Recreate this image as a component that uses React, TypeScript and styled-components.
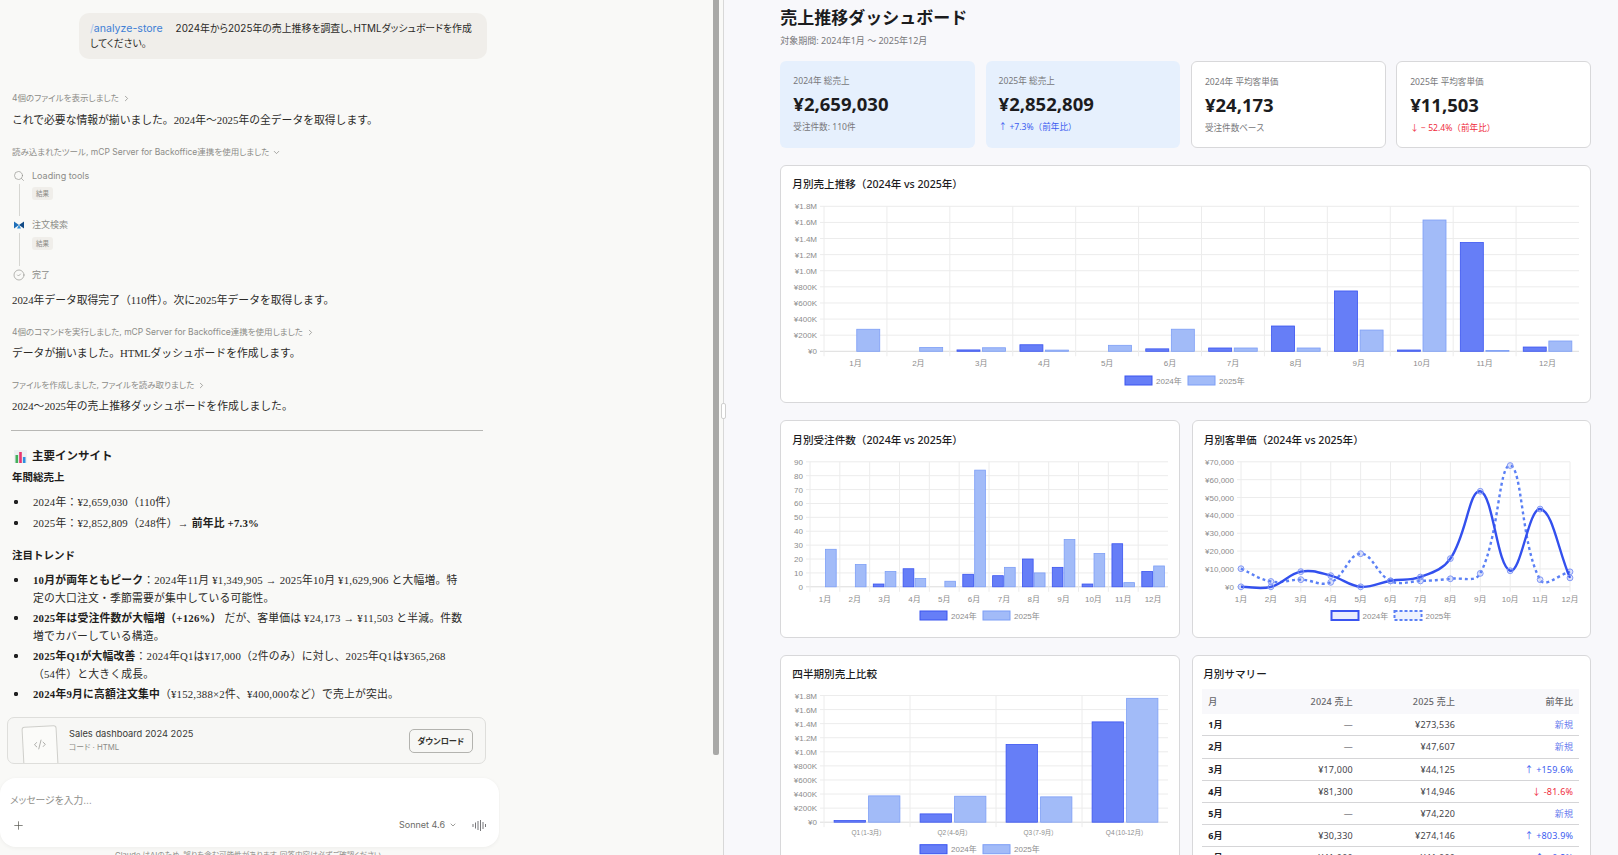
import React from 'react'
import styled, { createGlobalStyle } from 'styled-components'
import { ChevronRight, ChevronDown, Search, CircleCheck, Plus, CodeXml } from 'lucide-react'

/*---> Data <---*/
const MONTHS = ['1月', '2月', '3月', '4月', '5月', '6月', '7月', '8月', '9月', '10月', '11月', '12月']
const SALES_2024 = [0, 0, 17000, 81300, 0, 30330, 41000, 314000, 749000, 16000, 1349905, 53000]
const SALES_2025 = [273536, 47607, 44125, 14946, 74220, 274146, 41000, 41000, 264000, 1629906, 10000, 128000]
const ORDERS_2024 = [0, 0, 2, 13, 0, 9, 8, 20, 14, 2, 31, 11]
const ORDERS_2025 = [27, 16, 11, 6, 4, 84, 14, 10, 34, 24, 3, 15]
const PRICE_2024 = [0, 0, 8500, 6254, 0, 3370, 5500, 15800, 53500, 9000, 43545, 5000]
const PRICE_2025 = [10131, 2975, 4011, 2491, 18555, 3264, 3300, 4500, 7500, 67913, 4000, 8400]
const QUARTERS = ['Q1（1-3月）', 'Q2（4-6月）', 'Q3（7-9月）', 'Q4（10-12月）']
const QUARTER_2024 = [24000, 118000, 1104000, 1425000]
const QUARTER_2025 = [374000, 369000, 360000, 1760000]
const MONEY_TICKS = ['¥0', '¥200K', '¥400K', '¥600K', '¥800K', '¥1.0M', '¥1.2M', '¥1.4M', '¥1.6M', '¥1.8M']
const ORDER_TICKS = ['0', '10', '20', '30', '40', '50', '60', '70', '80', '90']
const PRICE_TICKS = ['¥0', '¥10,000', '¥20,000', '¥30,000', '¥40,000', '¥50,000', '¥60,000', '¥70,000']

const KPIS = [
  { label: '2024年 総売上', value: '¥2,659,030', note: '受注件数: 110件', tone: 'muted', blue: true },
  { label: '2025年 総売上', value: '¥2,852,809', note: '↑ +7.3%（前年比）', tone: 'up', blue: true },
  { label: '2024年 平均客単価', value: '¥24,173', note: '受注件数ベース', tone: 'muted', blue: false },
  { label: '2025年 平均客単価', value: '¥11,503', note: '↓ − 52.4%（前年比）', tone: 'down', blue: false },
]

const SUMMARY = [
  { month: '1月', a: '—', b: '¥273,536', yoy: '新規', tone: 'new' },
  { month: '2月', a: '—', b: '¥47,607', yoy: '新規', tone: 'new' },
  { month: '3月', a: '¥17,000', b: '¥44,125', yoy: '↑ +159.6%', tone: 'up' },
  { month: '4月', a: '¥81,300', b: '¥14,946', yoy: '↓ -81.6%', tone: 'down' },
  { month: '5月', a: '—', b: '¥74,220', yoy: '新規', tone: 'new' },
  { month: '6月', a: '¥30,330', b: '¥274,146', yoy: '↑ +803.9%', tone: 'up' },
  { month: '7月', a: '¥41,000', b: '¥41,000', yoy: '↑ +0.2%', tone: 'up' },
]

const TONES: Record<string, string> = {
  muted: '#77777a',
  up: '#3b5cf0',
  down: '#ef2b3b',
  new: '#6d80ee',
}

const BLUE_FILL = '#667ef7'
const BLUE_LINE = '#3a54f0'
const PALE_FILL = '#a2bbf8'
const PALE_LINE = '#7d9ef6'
const CHART_FONT = '"Liberation Sans", "Noto Sans CJK JP", sans-serif'

/*---> Chart helpers <---*/
type Frame = {
  width: number
  height: number
  left: number
  right: number
  top: number
  bottom: number
  labelY: number
  legendY: number
  legendX: number
}

const splinePath = (points: number[][]) => {
  const tension = 0.4
  const controls = points.map((point, i) => {
    const prev = points[i - 1] || point
    const next = points[i + 1] || point
    const d01 = Math.hypot(point[0] - prev[0], point[1] - prev[1])
    const d12 = Math.hypot(next[0] - point[0], next[1] - point[1])
    const total = d01 + d12 || 1
    const fa = (tension * d01) / total
    const fb = (tension * d12) / total
    return {
      inX: point[0] - fa * (next[0] - prev[0]),
      inY: point[1] - fa * (next[1] - prev[1]),
      outX: point[0] + fb * (next[0] - prev[0]),
      outY: point[1] + fb * (next[1] - prev[1]),
    }
  })
  let d = `M${points[0][0]} ${points[0][1]}`
  for (let i = 1; i < points.length; i++) {
    d += ` C${controls[i - 1].outX} ${controls[i - 1].outY} ${controls[i].inX} ${controls[i].inY} ${points[i][0]} ${points[i][1]}`
  }
  return d
}

const AxisGrid = ({
  frame,
  ticks,
  labels,
  categoryAxis,
  labelSize = 8,
}: {
  frame: Frame
  ticks: string[]
  labels: string[]
  categoryAxis: boolean
  labelSize?: number
}) => {
  const { left, right, top, bottom, labelY } = frame
  const xCount = categoryAxis ? labels.length : labels.length - 1
  const xStep = (right - left) / xCount
  const yStep = (bottom - top) / (ticks.length - 1)
  const xLines = Array.from({ length: xCount + 1 }, (_, i) => left + xStep * i)

  return (
    <g fontFamily={CHART_FONT} fill='#8c8c8c'>
      {ticks.map((tick, i) => (
        <g key={tick}>
          <line x1={left - 4} x2={right} y1={bottom - yStep * i} y2={bottom - yStep * i} stroke={i === 0 ? '#dcdcdc' : '#ececec'} />
          <text x={left - 7} y={bottom - yStep * i + 3} fontSize='8' textAnchor='end'>
            {tick}
          </text>
        </g>
      ))}
      {xLines.map((x, i) =>
        categoryAxis && i === xCount ? null : (
          <line key={x} x1={x} x2={x} y1={top} y2={bottom + 5} stroke='#ececec' />
        )
      )}
      {labels.map((label, i) => (
        <text
          key={label}
          x={categoryAxis ? left + xStep * (i + 0.5) : left + xStep * i}
          y={labelY + 3}
          fontSize={labelSize}
          textAnchor='middle'
        >
          {label}
        </text>
      ))}
    </g>
  )
}

const Legend = ({ frame, dashed }: { frame: Frame; dashed?: boolean }) => {
  const { legendX: x, legendY: y } = frame
  const items = [
    { label: '2024年', offset: 0, fill: dashed ? '#e9edfd' : BLUE_FILL, line: BLUE_LINE, dash: undefined },
    { label: '2025年', offset: 63, fill: dashed ? '#eef2fe' : PALE_FILL, line: dashed ? '#5b80f5' : PALE_LINE, dash: dashed ? '3 2' : undefined },
  ]
  return (
    <g fontFamily={CHART_FONT}>
      {items.map((item) => (
        <g key={item.label}>
          <rect
            x={x + item.offset}
            y={y - 4.5}
            width='27'
            height='9'
            fill={item.fill}
            stroke={item.line}
            strokeWidth={dashed ? 2 : 1}
            strokeDasharray={item.dash}
          />
          <text x={x + item.offset + 31} y={y + 3} fontSize='8' fill='#8c8c8c'>
            {item.label}
          </text>
        </g>
      ))}
    </g>
  )
}

const BarChart = ({
  frame,
  ticks,
  labels,
  max,
  first,
  second,
  barWidth,
  gap,
  labelSize,
}: {
  frame: Frame
  ticks: string[]
  labels: string[]
  max: number
  first: number[]
  second: number[]
  barWidth: number
  gap: number
  labelSize?: number
}) => {
  const { left, right, top, bottom, width, height } = frame
  const step = (right - left) / labels.length
  const toHeight = (value: number) => ((bottom - top) * value) / max

  return (
    <ChartSvg width={width} height={height}>
      <AxisGrid frame={frame} ticks={ticks} labels={labels} categoryAxis labelSize={labelSize} />
      {labels.map((label, i) => {
        const center = left + step * (i + 0.5)
        const h1 = toHeight(first[i])
        const h2 = toHeight(second[i])
        return (
          <g key={label}>
            {h1 > 0 && (
              <rect x={center - gap - barWidth} y={bottom - h1} width={barWidth} height={h1} fill={BLUE_FILL} stroke={BLUE_LINE} strokeWidth='0.8' />
            )}
            {h2 > 0 && (
              <rect x={center + gap} y={bottom - h2} width={barWidth} height={h2} fill={PALE_FILL} stroke={PALE_LINE} strokeWidth='0.8' />
            )}
          </g>
        )
      })}
      <Legend frame={frame} />
    </ChartSvg>
  )
}

const LineChart = ({ frame }: { frame: Frame }) => {
  const { left, right, top, bottom, width, height } = frame
  const toPoints = (values: number[]) =>
    values.map((value, i) => [
      left + ((right - left) * i) / (values.length - 1),
      bottom - ((bottom - top) * value) / 70000,
    ])
  const series = [
    { points: toPoints(PRICE_2025), color: '#5b80f5', dash: '3 3', key: '2025' },
    { points: toPoints(PRICE_2024), color: '#3350ee', dash: undefined, key: '2024' },
  ]

  return (
    <ChartSvg width={width} height={height}>
      <AxisGrid frame={frame} ticks={PRICE_TICKS} labels={MONTHS} categoryAxis={false} />
      {series.map((line) => (
        <g key={line.key}>
          <path d={splinePath(line.points)} fill='none' stroke={line.color} strokeWidth='2.4' strokeDasharray={line.dash} />
          {line.points.map((point) => (
            <circle key={point[0]} cx={point[0]} cy={point[1]} r='2.9' fill='rgba(90,120,245,0.2)' stroke='#8298f6' strokeWidth='1' />
          ))}
        </g>
      ))}
      <Legend frame={frame} dashed />
    </ChartSvg>
  )
}

const ConnectorMark = () => (
  <svg width='12' height='12' viewBox='0 0 12 12'>
    <path d='M1 2.5 L6 6 L1 9.5 Z' fill='#1f6fb8' />
    <path d='M11 2.5 L6 6 L11 9.5 Z' fill='#124a86' />
    <path d='M4 9.5 L6 6 L8 9.5 Z' fill='#2a8bd6' />
  </svg>
)

const ChartEmoji = () => (
  <svg width='13' height='13' viewBox='0 0 13 13'>
    <rect width='13' height='13' fill='#eceff1' />
    <rect x='1.5' y='5' width='2.6' height='8' fill='#43b05c' />
    <rect x='5.2' y='2' width='2.6' height='11' fill='#e8356f' />
    <rect x='8.9' y='7' width='2.6' height='6' fill='#2f8fe0' />
  </svg>
)

const VoiceMark = () => (
  <svg width='15' height='11' viewBox='0 0 15 11' stroke='#77777a' strokeWidth='1'>
    <path d='M1 4v3M3.5 2.5v6M6 1v9M8.5 0v11M11 2v7M13.5 4v3' />
  </svg>
)

/*---> Components <---*/
const App = () => {
  return (
    <>
      <GlobalStyle />
      <Page>
        <LeftPane>
          <ChatColumn>
            <UserBubble>
              <SlashCommand>
                <SlashMark>/</SlashMark>analyze-store
              </SlashCommand>
              2024年から2025年の売上推移を調査し、HTMLダッシュボードを作成
              <br />
              してください。
            </UserBubble>

            <ActivityLabel $mt={33.2}>
              4個のファイルを表示しました <ChevronRight size={9} />
            </ActivityLabel>
            <Reply $mt={7}>これで必要な情報が揃いました。2024年～2025年の全データを取得します。</Reply>

            <ActivityLabel $mt={17}>
              読み込まれたツール, mCP Server for Backoffice連携を使用しました <ChevronDown size={9} />
            </ActivityLabel>
            <Timeline>
              <Step>
                <StepRail>
                  <Search size={12} color='#8f8f8b' strokeWidth={1.3} />
                  <RailLine />
                </StepRail>
                <StepBody>
                  <StepTitle>Loading tools</StepTitle>
                  <ResultTag>結果</ResultTag>
                </StepBody>
              </Step>
              <Step>
                <StepRail>
                  <ConnectorMark />
                  <RailLine />
                </StepRail>
                <StepBody>
                  <StepTitle>注文検索</StepTitle>
                  <ResultTag>結果</ResultTag>
                </StepBody>
              </Step>
              <Step $last>
                <StepRail>
                  <CircleCheck size={12} color='#8f8f8b' strokeWidth={1.3} />
                </StepRail>
                <StepBody>
                  <StepTitle>完了</StepTitle>
                </StepBody>
              </Step>
            </Timeline>

            <Reply $mt={9}>2024年データ取得完了（110件）。次に2025年データを取得します。</Reply>
            <ActivityLabel $mt={17}>
              4個のコマンドを実行しました, mCP Server for Backoffice連携を使用しました <ChevronRight size={9} />
            </ActivityLabel>
            <Reply $mt={6}>データが揃いました。HTMLダッシュボードを作成します。</Reply>
            <ActivityLabel $mt={17}>
              ファイルを作成しました, ファイルを読み取りました <ChevronRight size={9} />
            </ActivityLabel>
            <Reply $mt={6}>2024～2025年の売上推移ダッシュボードを作成しました。</Reply>

            <Rule />

            <InsightHeading>
              <ChartEmoji /> 主要インサイト
            </InsightHeading>
            <InsightSubheading $mt={4}>年間総売上</InsightSubheading>
            <InsightList>
              <InsightItem>2024年：¥2,659,030（110件）</InsightItem>
              <InsightItem $gap={3}>
                2025年：¥2,852,809（248件）→ <strong>前年比 +7.3%</strong>
              </InsightItem>
            </InsightList>
            <InsightSubheading $mt={15}>注目トレンド</InsightSubheading>
            <InsightList>
              <InsightItem>
                <strong>10月が両年ともピーク</strong>：2024年11月 ¥1,349,905 → 2025年10月 ¥1,629,906 と大幅増。特
                <br />
                定の大口注文・季節需要が集中している可能性。
              </InsightItem>
              <InsightItem $gap={2}>
                <strong>2025年は受注件数が大幅増（+126%）</strong> だが、客単価は ¥24,173 → ¥11,503 と半減。件数
                <br />
                増でカバーしている構造。
              </InsightItem>
              <InsightItem $gap={2}>
                <strong>2025年Q1が大幅改善</strong>：2024年Q1は¥17,000（2件のみ）に対し、2025年Q1は¥365,268
                <br />
                （54件）と大きく成長。
              </InsightItem>
              <InsightItem $gap={2}>
                <strong>2024年9月に高額注文集中</strong>（¥152,388×2件、¥400,000など）で売上が突出。
              </InsightItem>
            </InsightList>

            <Attachment>
              <DocTile>
                <CodeXml size={13} color='#9a9a96' strokeWidth={1.4} />
              </DocTile>
              <AttachmentText>
                <AttachmentName>Sales dashboard 2024 2025</AttachmentName>
                <AttachmentMeta>コード · HTML</AttachmentMeta>
              </AttachmentText>
              <DownloadButton>ダウンロード</DownloadButton>
            </Attachment>

            <Composer>
              <Placeholder>メッセージを入力…</Placeholder>
              <ComposerBar>
                <Plus size={13} color='#55554f' strokeWidth={1.3} />
                <ComposerRight>
                  <ModelName>
                    Sonnet 4.6 <ChevronDown size={8} />
                  </ModelName>
                  <VoiceMark />
                </ComposerRight>
              </ComposerBar>
            </Composer>
            <Disclaimer>Claude はAIのため、誤りを含む可能性があります。回答内容は必ずご確認ください。</Disclaimer>
          </ChatColumn>
          <ScrollThumb />
        </LeftPane>

        <Divider>
          <DividerHandle />
        </Divider>

        <RightPane>
          <DashTitle>売上推移ダッシュボード</DashTitle>
          <DashPeriod>対象期間: 2024年1月 〜 2025年12月</DashPeriod>

          <KpiGrid>
            {KPIS.map((kpi) => (
              <KpiCard key={kpi.label} $blue={kpi.blue}>
                <KpiLabel>{kpi.label}</KpiLabel>
                <KpiValue>{kpi.value}</KpiValue>
                <KpiNote $color={TONES[kpi.tone]}>{kpi.note}</KpiNote>
              </KpiCard>
            ))}
          </KpiGrid>

          <WideCard>
            <CardTitle>月別売上推移（2024年 vs 2025年）</CardTitle>
            <BarChart
              frame={{ width: 808, height: 209, left: 43, right: 798, top: 13.3, bottom: 158.3, labelY: 170, legendY: 187.5, legendX: 344 }}
              ticks={MONEY_TICKS}
              labels={MONTHS}
              max={1800000}
              first={SALES_2024}
              second={SALES_2025}
              barWidth={23}
              gap={1.3}
            />
          </WideCard>

          <TwoColumns>
            <ChartCard>
              <CardTitle>月別受注件数（2024年 vs 2025年）</CardTitle>
              <BarChart
                frame={{ width: 398, height: 188, left: 29, right: 387, top: 12.8, bottom: 137.8, labelY: 149.5, legendY: 166.5, legendX: 139 }}
                ticks={ORDER_TICKS}
                labels={MONTHS}
                max={90}
                first={ORDERS_2024}
                second={ORDERS_2025}
                barWidth={10.7}
                gap={0.6}
              />
            </ChartCard>
            <ChartCard>
              <CardTitle>月別客単価（2024年 vs 2025年）</CardTitle>
              <LineChart frame={{ width: 397, height: 188, left: 48, right: 377, top: 12.8, bottom: 137.8, labelY: 149.5, legendY: 166.5, legendX: 138.5 }} />
            </ChartCard>
          </TwoColumns>

          <TwoColumns>
            <ChartCard>
              <CardTitle>四半期別売上比較</CardTitle>
              <BarChart
                frame={{ width: 398, height: 188, left: 43, right: 387, top: 12.5, bottom: 139.2, labelY: 149.2, legendY: 166.2, legendX: 139 }}
                ticks={MONEY_TICKS}
                labels={QUARTERS}
                max={1800000}
                first={QUARTER_2024}
                second={QUARTER_2025}
                barWidth={31.3}
                gap={1.6}
                labelSize={6.5}
              />
            </ChartCard>
            <TableCard>
              <CardTitle>月別サマリー</CardTitle>
              <SummaryTable>
                <thead>
                  <tr>
                    <th>月</th>
                    <th>2024 売上</th>
                    <th>2025 売上</th>
                    <th>前年比</th>
                  </tr>
                </thead>
                <tbody>
                  {SUMMARY.map((row) => (
                    <tr key={row.month}>
                      <td>{row.month}</td>
                      <td>{row.a}</td>
                      <td>{row.b}</td>
                      <YoyCell $color={TONES[row.tone]}>{row.yoy}</YoyCell>
                    </tr>
                  ))}
                </tbody>
              </SummaryTable>
            </TableCard>
          </TwoColumns>
        </RightPane>
      </Page>
    </>
  )
}

/*---> Styles <---*/
const GlobalStyle = createGlobalStyle`
  html, body {
    margin: 0;
    height: 855px;
    overflow: hidden;
    background: #f9f9f7;
  }
  * {
    box-sizing: border-box;
  }
`

const Page = styled.div`
  display: flex;
  width: 1618px;
  height: 855px;
  overflow: hidden;
`

const LeftPane = styled.div`
  display: flex;
  align-items: flex-start;
  width: 723px;
  height: 855px;
  background: #f9f9f7;
`

const ChatColumn = styled.div`
  display: flex;
  flex-direction: column;
  flex: 0 0 500px;
  height: 855px;
  overflow: hidden;
  color: #2b2a27;

  & > * {
    flex: none;
  }
`

const ScrollThumb = styled.div`
  width: 6px;
  height: 755px;
  margin-left: 213px;
  background: #a9a9a7;
  border-radius: 0 0 2px 2px;
`

const UserBubble = styled.div`
  width: 408px;
  height: 46px;
  margin: 13px 0 0 79px;
  padding: 8px 0 0 11px;
  background: #f0eeea;
  border-radius: 10px;
  font: 9.9px/15px 'Inter', 'Noto Sans CJK JP', sans-serif;
  font-feature-settings: 'palt';
  white-space: nowrap;
  color: #2b2a27;
`

const SlashCommand = styled.span`
  margin-right: 13px;
  font-size: 10.6px;
  color: #3f7fd6;
`

const SlashMark = styled.span`
  color: #a9c4ea;
`

const ActivityLabel = styled.div<{ $mt: number }>`
  display: flex;
  align-items: center;
  gap: 3px;
  height: 12px;
  margin: ${(p) => p.$mt}px 0 0 12px;
  font: 8.5px/12px 'Inter', 'Noto Sans CJK JP', sans-serif;
  font-feature-settings: 'palt';
  color: #8c8c88;
`

const Reply = styled.div<{ $mt: number }>`
  margin: ${(p) => p.$mt}px 0 0 12px;
  font: 10.8px/18px 'Liberation Serif', 'Noto Sans CJK JP', serif;
  color: #2b2a27;
`

const Timeline = styled.div`
  display: flex;
  flex-direction: column;
  margin: 10.5px 0 0 12px;
`

const Step = styled.div<{ $last?: boolean }>`
  display: flex;
  gap: 6px;
  height: ${(p) => (p.$last ? 14 : 49.7)}px;
`

const StepRail = styled.div`
  display: flex;
  flex-direction: column;
  align-items: center;
  flex: 0 0 14px;
  padding-top: 1px;
`

const RailLine = styled.div`
  flex: 1;
  width: 1px;
  margin: 2px 0 2px;
  background: #d6d6d2;
`

const StepBody = styled.div`
  display: flex;
  flex-direction: column;
  align-items: flex-start;
`

const StepTitle = styled.div`
  font: 9px/14px 'Inter', 'Noto Sans CJK JP', sans-serif;
  color: #8c8c88;
`

const ResultTag = styled.div`
  width: 21px;
  height: 13px;
  margin-top: 4.5px;
  background: #f0eeea;
  border-radius: 3px;
  font: 6.5px/13px 'Noto Sans CJK JP', sans-serif;
  text-align: center;
  color: #8c8c88;
`

const Rule = styled.div`
  width: 472px;
  height: 1px;
  margin: 15px 0 0 11px;
  background: #b8b8b5;
`

const InsightHeading = styled.div`
  display: flex;
  align-items: center;
  gap: 5px;
  margin: 16px 0 0 14px;
  font: bold 11.5px/18px 'Liberation Serif', 'Noto Sans CJK JP', serif;
  color: #1f1e1c;
`

const InsightSubheading = styled.div<{ $mt: number }>`
  margin: ${(p) => p.$mt}px 0 0 12px;
  font: bold 10.5px/18px 'Liberation Serif', 'Noto Sans CJK JP', serif;
  color: #1f1e1c;
`

const InsightList = styled.ul`
  margin: 6px 0 0;
  padding: 0;
  list-style: none;
`

const InsightItem = styled.li<{ $gap?: number }>`
  margin-top: ${(p) => p.$gap || 0}px;
  padding-left: 33px;
  background: radial-gradient(circle at 16px 9px, #222 1.9px, transparent 2.4px) no-repeat;
  font: 10.8px/18px 'Liberation Serif', 'Noto Sans CJK JP', serif;
  letter-spacing: 0.2px;
  white-space: nowrap;
  color: #2b2a27;

  strong {
    color: #1f1e1c;
    font-weight: bold;
  }
`

const Attachment = styled.div`
  display: flex;
  align-items: flex-start;
  width: 479px;
  height: 47px;
  margin: 14px 0 0 7px;
  padding: 0 12px 0 15px;
  overflow: hidden;
  border: 1px solid #dededb;
  border-radius: 7px;
  background: #f7f7f5;
`

const DocTile = styled.div`
  display: flex;
  align-items: center;
  justify-content: center;
  flex: 0 0 35px;
  height: 60px;
  margin-top: 8px;
  padding-bottom: 24px;
  background: #fbfbf9;
  border: 1px solid #cfcfcb;
  border-radius: 3px;
  transform: rotate(-3deg);
`

const AttachmentText = styled.div`
  flex: 1;
  margin: 8px 0 0 11px;
`

const AttachmentName = styled.div`
  font: 9.3px/15px 'Inter', 'Noto Sans CJK JP', sans-serif;
  color: #3a3a36;
`

const AttachmentMeta = styled.div`
  font: 7.8px/13px 'Inter', 'Noto Sans CJK JP', sans-serif;
  font-feature-settings: 'palt';
  color: #8c8c88;
`

const DownloadButton = styled.div`
  width: 64.5px;
  height: 23.5px;
  margin-top: 11px;
  border: 1px solid #b3b3af;
  border-radius: 5px;
  font: bold 8.2px/21.5px 'Noto Sans CJK JP', sans-serif;
  font-feature-settings: 'palt';
  text-align: center;
  color: #33332f;
`

const Composer = styled.div`
  width: 499px;
  height: 69px;
  margin-top: 14px;
  padding: 15px 12px 0 10px;
  background: #ffffff;
  border-radius: 16px;
  box-shadow: 0 1px 4px rgba(0, 0, 0, 0.05);
`

const Placeholder = styled.div`
  font: 9.8px/16px 'Inter', 'Noto Sans CJK JP', sans-serif;
  font-feature-settings: 'palt';
  color: #8f8f8b;
`

const ComposerBar = styled.div`
  display: flex;
  align-items: center;
  justify-content: space-between;
  height: 20px;
  margin-top: 6px;
  padding-left: 2px;
`

const ComposerRight = styled.div`
  display: flex;
  align-items: center;
  gap: 15px;
`

const ModelName = styled.div`
  display: flex;
  align-items: center;
  gap: 4px;
  font: 9px/12px 'Inter', 'Noto Sans CJK JP', sans-serif;
  color: #6b6b67;
`

const Disclaimer = styled.div`
  margin-top: 3px;
  font: 7.6px/12px 'Inter', 'Noto Sans CJK JP', sans-serif;
  font-feature-settings: 'palt';
  text-align: center;
  color: #8c8c88;
`

const Divider = styled.div`
  position: relative;
  flex: 0 0 1px;
  height: 855px;
  background: #d8d8d8;
`

const DividerHandle = styled.div`
  position: absolute;
  top: 403px;
  left: -2px;
  width: 5px;
  height: 16px;
  background: #ffffff;
  border: 1px solid #cfcfcf;
  border-radius: 2px;
`

const RightPane = styled.div`
  flex: 1;
  height: 855px;
  padding: 5px 27px 0 56.3px;
  overflow: hidden;
  background: #f8f8fb;
  font-family: 'Noto Sans', 'Noto Sans CJK JP', sans-serif;
  font-feature-settings: 'palt';
`

const DashTitle = styled.div`
  font: bold 17px/23px 'Noto Sans CJK JP', sans-serif;
  color: #1c1c1e;
`

const DashPeriod = styled.div`
  margin-top: 6px;
  font-size: 9px;
  line-height: 13px;
  color: #77777a;
`

const KpiGrid = styled.div`
  display: grid;
  grid-template-columns: repeat(4, 1fr);
  gap: 10.5px;
  height: 87px;
  margin-top: 14px;
`

const KpiCard = styled.div<{ $blue: boolean }>`
  padding: ${(p) => (p.$blue ? 13 : 12.5)}px 13px 0;
  background: ${(p) => (p.$blue ? '#e6f0fd' : '#ffffff')};
  border: ${(p) => (p.$blue ? 'none' : '1px solid #d8d8da')};
  border-radius: 6px;
`

const KpiLabel = styled.div`
  font-size: 8.6px;
  line-height: 14px;
  color: #77777a;
`

const KpiValue = styled.div`
  margin-top: 3px;
  font-size: 18.5px;
  font-weight: 700;
  line-height: 25px;
  color: #1c1c1e;
`

const KpiNote = styled.div<{ $color: string }>`
  margin-top: 4px;
  font-size: 8.6px;
  font-feature-settings: normal;
  line-height: 14px;
  white-space: pre;
  color: ${(p) => p.$color};
`

const ChartCard = styled.div`
  height: 217.5px;
  padding-top: 9.5px;
  background: #ffffff;
  border: 1px solid #d8d8da;
  border-radius: 6px;
  overflow: hidden;
`

const WideCard = styled(ChartCard)`
  height: 238.5px;
  margin-top: 16.5px;
`

const TableCard = styled(ChartCard)`
  padding: 9.5px 10.5px 0 9.5px;
`

const TwoColumns = styled.div`
  display: grid;
  grid-template-columns: 400px 399px;
  gap: 11.4px;
  margin-top: 17px;
`

const CardTitle = styled.div`
  padding-left: 11px;
  font: 500 10.6px/18px 'Noto Sans', 'Noto Sans CJK JP', sans-serif;
  color: #1c1c1e;

  ${TableCard} & {
    padding-left: 1px;
  }
`

const ChartSvg = styled.svg`
  display: block;
`

const SummaryTable = styled.table`
  width: 377px;
  margin-top: 6px;
  border-collapse: collapse;
  table-layout: fixed;
  font-size: 9px;
  letter-spacing: 0.2px;
  color: #44444a;

  th {
    height: 24.7px;
    padding: 0 6px;
    background: #f8f8fb;
    font-weight: 500;
    text-align: right;
    white-space: nowrap;
    color: #66666a;
  }

  th:nth-child(1) {
    width: 50px;
  }

  th:nth-child(2) {
    width: 106.7px;
  }

  th:nth-child(3) {
    width: 102.3px;
  }

  th:first-child,
  td:first-child {
    text-align: left;
  }

  td {
    height: 22.2px;
    padding: 0 6px;
    border-bottom: 1px solid #d5d5d7;
    text-align: right;
  }

  td:first-child {
    font-weight: 700;
    color: #222226;
  }
`

const YoyCell = styled.td<{ $color: string }>`
  color: ${(p) => p.$color};
`

export default App
